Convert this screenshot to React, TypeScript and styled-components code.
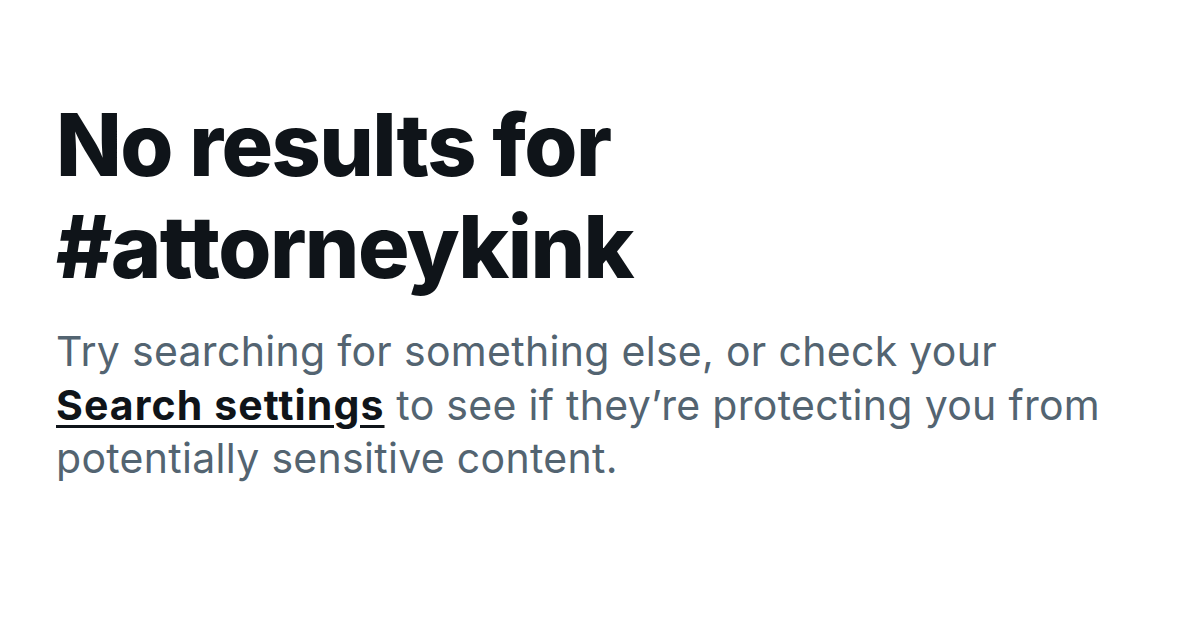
import React from 'react';
import styled, { createGlobalStyle } from 'styled-components';

const GlobalStyle = createGlobalStyle`
  html, body {
    margin: 0;
    padding: 0;
    background: #ffffff;
  }
  body {
    font-family: Inter, "Noto Sans", "DejaVu Sans", sans-serif;
    -webkit-font-smoothing: antialiased;
  }
`;

const Page = styled.main`
  width: 1179px;
  height: 641px;
  box-sizing: border-box;
  padding: 94px 0 0 56px;
  background: #ffffff;
`;

const EmptyState = styled.section`
  display: flex;
  flex-direction: column;
  width: 1075px;
`;

const Title = styled.h1`
  margin: 0;
  font-family: Inter, sans-serif;
  font-size: 86px;
  font-weight: 800;
  line-height: 102px;
  letter-spacing: -0.018em;
  color: #0f1419;
`;

const Message = styled.p`
  margin: 27px 0 0;
  font-family: Inter, sans-serif;
  font-size: 41px;
  font-weight: 400;
  line-height: 53.5px;
  letter-spacing: 0.3px;
  color: #536471;
`;

const SettingsLink = styled.a`
  font-weight: 700;
  letter-spacing: 1.1px;
  color: #0f1419;
  text-decoration: underline;
  text-decoration-thickness: 3px;
  text-underline-offset: 5px;
`;

export default function App() {
  return (
    <>
      <GlobalStyle />
      <Page>
        <EmptyState>
          <Title>
            No results for
            <br />
            #attorneykink
          </Title>
          <Message>
            Try searching for something else, or check your{' '}
            <SettingsLink href="#">Search settings</SettingsLink> to see if they’re protecting you from potentially
            sensitive content.
          </Message>
        </EmptyState>
      </Page>
    </>
  );
}
